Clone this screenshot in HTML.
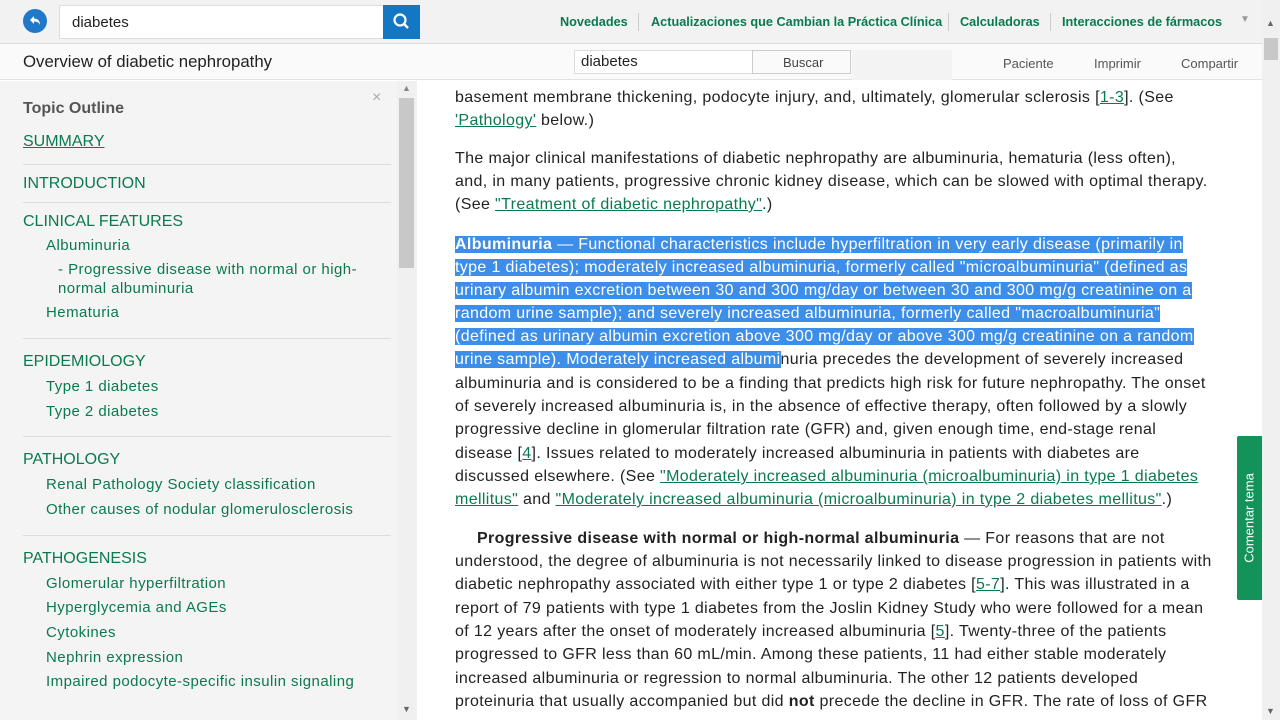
<!DOCTYPE html>
<html><head><meta charset="utf-8"><style>
*{margin:0;padding:0;box-sizing:border-box}
body{width:1280px;height:720px;overflow:hidden;background:#fff;font-family:"Liberation Sans",Arial,sans-serif;position:relative;color:#222}
.abs{position:absolute;white-space:nowrap}
#top{position:absolute;left:0;top:0;width:1262px;height:44px;background:#f2f2f2;border-bottom:1px solid #ddd}
#sub{position:absolute;left:0;top:44px;width:1262px;height:36px;background:#fafafa;border-bottom:1px solid #e2e2e2}
.nav{position:absolute;top:15px;font-size:12.7px;font-weight:bold;color:#0a7a4e}
.sep{position:absolute;top:13px;width:1px;height:18px;background:#ccc}
#left{position:absolute;left:0;top:81px;width:397px;height:639px;background:#f4f4f4}
#lsb{position:absolute;left:397px;top:81px;width:20px;height:639px;background:#f0f0f0}
.o{position:absolute;font-size:16px;color:#0a7a4e;white-space:nowrap}
.s{font-size:15px;letter-spacing:0.45px}
.hr{position:absolute;left:23px;width:368px;height:1px;background:#ddd}
.l{position:absolute;left:455px;font-size:16px;letter-spacing:0.36px;line-height:23px;white-space:nowrap;color:#222}
.l a{color:#0a7a4e;text-decoration:underline}
.hl{background:#3d8ee8;color:#fff}
#rsb{position:absolute;left:1262px;top:0;width:18px;height:720px;background:#f0f0f0}
</style></head><body>
<div id="top">
 <div style="position:absolute;left:23px;top:9px;width:24px;height:24px;border-radius:50%;background:#1f78c8"><svg width="24" height="24" viewBox="0 0 24 24"><path d="M7 11 L11 7 L11 9.5 C15 9.5 17 12 17 16 C16 13.5 14 12.5 11 12.5 L11 15 Z" fill="#fff"/></svg></div>
 <div style="position:absolute;left:59px;top:5px;width:325px;height:34px;background:#fff;border:1px solid #ddd;font-size:15px;padding:8px 12px">diabetes</div>
 <div style="position:absolute;left:383px;top:5px;width:37px;height:34px;background:#1477c3"><svg width="37" height="34"><circle cx="17" cy="15" r="5.5" stroke="#fff" stroke-width="2.2" fill="none"/><line x1="21" y1="19" x2="25" y2="23" stroke="#fff" stroke-width="2.5"/></svg></div>
 <div class="nav" style="left:560px">Novedades</div><div class="sep" style="left:638px"></div>
 <div class="nav" style="left:651px">Actualizaciones que Cambian la Práctica Clínica</div><div class="sep" style="left:948px"></div>
 <div class="nav" style="left:960px">Calculadoras</div><div class="sep" style="left:1050px"></div>
 <div class="nav" style="left:1062px">Interacciones de fármacos</div>
 <div class="abs" style="left:1240px;top:14px;font-size:10px;color:#999">▼</div>
</div>
<div id="sub">
 <div class="abs" style="left:23px;top:8px;font-size:16.8px;color:#222">Overview of diabetic nephropathy</div>
 <div style="position:absolute;left:574px;top:6px;width:179px;height:24px;background:#fff;border:1px solid #ddd;font-size:15px;padding:2px 6px">diabetes</div>
 <div style="position:absolute;left:752px;top:6px;width:99px;height:24px;background:#fafafa;border:1px solid #ccc;font-size:13px;color:#444;padding:4px 30px">Buscar</div>
 <div style="position:absolute;left:852px;top:6px;width:100px;height:30px;background:#f3f3f3"></div>
 <div class="abs" style="left:1003px;top:12px;font-size:13px;color:#555">Paciente</div>
 <div class="abs" style="left:1094px;top:12px;font-size:13px;color:#555">Imprimir</div>
 <div class="abs" style="left:1181px;top:12px;font-size:13px;color:#555">Compartir</div>
</div>
<div id="left">
 <div class="abs" style="left:23px;top:19px;font-size:16px;font-weight:bold;color:#555">Topic Outline</div>
 <div class="abs" style="left:372px;top:8px;font-size:16px;color:#aaa">×</div>
 <div class="o" style="left:23px;top:52px;text-decoration:underline">SUMMARY</div>
 <div class="hr" style="top:83px"></div>
 <div class="o" style="left:23px;top:94px">INTRODUCTION</div>
 <div class="hr" style="top:121px"></div>
 <div class="o" style="left:23px;top:132px">CLINICAL FEATURES</div>
 <div class="o s" style="left:46px;top:156px">Albuminuria</div>
 <div class="o s" style="left:58px;top:180px">- Progressive disease with normal or high-</div>
 <div class="o s" style="left:58px;top:199px">normal albuminuria</div>
 <div class="o s" style="left:46px;top:223px">Hematuria</div>
 <div class="hr" style="top:257px"></div>
 <div class="o" style="left:23px;top:272px">EPIDEMIOLOGY</div>
 <div class="o s" style="left:46px;top:297px">Type 1 diabetes</div>
 <div class="o s" style="left:46px;top:322px">Type 2 diabetes</div>
 <div class="hr" style="top:355px"></div>
 <div class="o" style="left:23px;top:370px">PATHOLOGY</div>
 <div class="o s" style="left:46px;top:395px">Renal Pathology Society classification</div>
 <div class="o s" style="left:46px;top:420px">Other causes of nodular glomerulosclerosis</div>
 <div class="hr" style="top:454px"></div>
 <div class="o" style="left:23px;top:469px">PATHOGENESIS</div>
 <div class="o s" style="left:46px;top:494px">Glomerular hyperfiltration</div>
 <div class="o s" style="left:46px;top:518px">Hyperglycemia and AGEs</div>
 <div class="o s" style="left:46px;top:543px">Cytokines</div>
 <div class="o s" style="left:46px;top:568px">Nephrin expression</div>
 <div class="o s" style="left:46px;top:592px">Impaired podocyte-specific insulin signaling</div>
</div>
<div id="lsb">
 <div class="abs" style="left:5px;top:2px;font-size:9px;color:#888">▲</div>
 <div style="position:absolute;left:2px;top:17px;width:15px;height:170px;background:#c8c8c8"></div>
 <div class="abs" style="left:5px;top:623px;font-size:9px;color:#666">▼</div>
</div>
<div class="l" style="top:86px">basement membrane thickening, podocyte injury, and, ultimately, glomerular sclerosis [<a>1-3</a>]. (See</div>
<div class="l" style="top:109px"><a>'Pathology'</a> below.)</div>
<div class="l" style="top:147px">The major clinical manifestations of diabetic nephropathy are albuminuria, hematuria (less often),</div>
<div class="l" style="top:170px">and, in many patients, progressive chronic kidney disease, which can be slowed with optimal therapy.</div>
<div class="l" style="top:193px">(See <a>"Treatment of diabetic nephropathy"</a>.)</div>
<div class="l" style="top:233px"><span class="hl"><b>Albuminuria</b> — Functional characteristics include hyperfiltration in very early disease (primarily in</span></div>
<div class="l" style="top:256px"><span class="hl">type 1 diabetes); moderately increased albuminuria, formerly called "microalbuminuria" (defined as</span></div>
<div class="l" style="top:279px"><span class="hl">urinary albumin excretion between 30 and 300 mg/day or between 30 and 300 mg/g creatinine on a</span></div>
<div class="l" style="top:302px"><span class="hl">random urine sample); and severely increased albuminuria, formerly called "macroalbuminuria"</span></div>
<div class="l" style="top:325px"><span class="hl">(defined as urinary albumin excretion above 300 mg/day or above 300 mg/g creatinine on a random</span></div>
<div class="l" style="top:348px"><span class="hl">urine sample). Moderately increased albumi</span>nuria precedes the development of severely increased</div>
<div class="l" style="top:372px">albuminuria and is considered to be a finding that predicts high risk for future nephropathy. The onset</div>
<div class="l" style="top:395px">of severely increased albuminuria is, in the absence of effective therapy, often followed by a slowly</div>
<div class="l" style="top:418px">progressive decline in glomerular filtration rate (GFR) and, given enough time, end-stage renal</div>
<div class="l" style="top:442px">disease [<a>4</a>]. Issues related to moderately increased albuminuria in patients with diabetes are</div>
<div class="l" style="top:465px">discussed elsewhere. (See <a>"Moderately increased albuminuria (microalbuminuria) in type 1 diabetes</a></div>
<div class="l" style="top:488px"><a>mellitus"</a> and <a>"Moderately increased albuminuria (microalbuminuria) in type 2 diabetes mellitus"</a>.)</div>
<div class="l" style="top:527px;left:477px"><b>Progressive disease with normal or high-normal albuminuria</b> — For reasons that are not</div>
<div class="l" style="top:550px">understood, the degree of albuminuria is not necessarily linked to disease progression in patients with</div>
<div class="l" style="top:573px">diabetic nephropathy associated with either type 1 or type 2 diabetes [<a>5-7</a>]. This was illustrated in a</div>
<div class="l" style="top:597px">report of 79 patients with type 1 diabetes from the Joslin Kidney Study who were followed for a mean</div>
<div class="l" style="top:620px">of 12 years after the onset of moderately increased albuminuria [<a>5</a>]. Twenty-three of the patients</div>
<div class="l" style="top:643px">progressed to GFR less than 60 mL/min. Among these patients, 11 had either stable moderately</div>
<div class="l" style="top:667px">increased albuminuria or regression to normal albuminuria. The other 12 patients developed</div>
<div class="l" style="top:690px">proteinuria that usually accompanied but did <b>not</b> precede the decline in GFR. The rate of loss of GFR</div>
<div style="position:absolute;left:1237px;top:436px;width:25px;height:164px;background:#13925a;border-radius:2px 0 0 2px"></div>
<div class="abs" style="left:1249px;top:518px;font-size:13px;color:#fff;transform:translate(-50%,-50%) rotate(-90deg)">Comentar tema</div>
<div id="rsb">
 <div class="abs" style="left:4px;top:18px;font-size:9px;color:#666">▲</div>
 <div style="position:absolute;left:2px;top:38px;width:14px;height:22px;background:#c8c8c8"></div>
 <div class="abs" style="left:4px;top:706px;font-size:9px;color:#666">▼</div>
</div>
</body></html>
